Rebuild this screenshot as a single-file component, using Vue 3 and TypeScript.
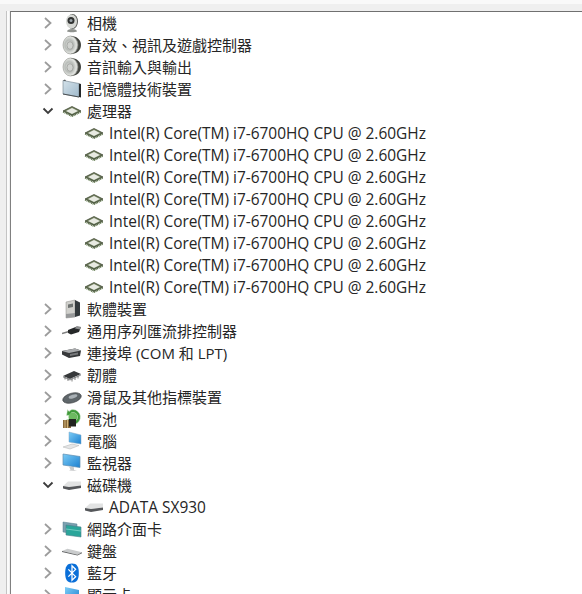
<template>
  <div class="window">
    <svg class="sprite" width="0" height="0" aria-hidden="true">
      <defs>
        <linearGradient id="screen" x1="0" y1="0" x2="1" y2="1">
          <stop offset="0" stop-color="#7cccf6" />
          <stop offset="1" stop-color="#1c80d0" />
        </linearGradient>
        <linearGradient id="chipTop" x1="0" y1="0" x2="0" y2="1">
          <stop offset="0" stop-color="#7f8a6a" />
          <stop offset="1" stop-color="#56684a" />
        </linearGradient>
        <radialGradient id="cone" cx="0.42" cy="0.5" r="0.62">
          <stop offset="0" stop-color="#f6f6f4" />
          <stop offset="0.45" stop-color="#b8bcb8" />
          <stop offset="0.75" stop-color="#e2e4e0" />
          <stop offset="1" stop-color="#a8aaa6" />
        </radialGradient>
        <linearGradient id="memoryFace" x1="0" y1="0" x2="1" y2="1">
          <stop offset="0" stop-color="#d4e2ea" />
          <stop offset="1" stop-color="#9fb9cb" />
        </linearGradient>
      </defs>
      <symbol id="camera" viewBox="0 0 20 20">
        <path d="M5 18.500c0-1.500 2-2.500 5-2.500s5 1 5 2.500c-2 1-8 1-10 0z" fill="#8f928e" />
        <ellipse cx="10.500" cy="8.500" rx="5.500" ry="7.500" fill="#5c5f5c" />
        <ellipse cx="9.500" cy="8.500" rx="5.500" ry="7" fill="#d6d8d4" />
        <circle cx="9" cy="7.500" r="3.500" fill="#303231" />
        <circle cx="9" cy="7.500" r="1.500" fill="#9aa4aa" />
      </symbol>
      <symbol id="speaker" viewBox="0 0 20 20">
        <path d="M9 1c6 0 10 4 10 9s-4 9-10 9z" fill="#42443f" />
        <ellipse cx="8.500" cy="10" rx="7.500" ry="9" fill="url(#cone)" stroke="#8e908c" stroke-width=".6" />
        <ellipse cx="8" cy="10.500" rx="3" ry="3.800" fill="#d0d2cf" stroke="#8f918d" stroke-width=".6" />
      </symbol>
      <symbol id="memory" viewBox="0 0 20 20">
        <path d="M1 1.500l16 3V18L1 15z" fill="url(#memoryFace)" stroke="#6f808c" stroke-width=".6" />
        <path d="M17 4.500l2 .5v13.500l-2-.5z" fill="#24282a" />
        <path d="M1 15l16 3" fill="none" stroke="#4c5154" />
        <path d="M1 1.500l2-1 1 1.500" fill="#3a3d3f" />
      </symbol>
      <symbol id="cpu" viewBox="0 0 20 20">
        <path d="M1 11l9 4.500 9-4.500" fill="none" stroke="#4f6a3a" stroke-width="1.300" stroke-dasharray="1 .7" />
        <path d="M10 5.500l9 4.500-9 4.500-9-4.500z" fill="url(#chipTop)" stroke="#2f3a22" stroke-width=".7" />
        <path d="M10 7l6 3-6 3-6-3z" fill="#e8eae2" />
      </symbol>
      <symbol id="software" viewBox="0 0 20 20">
        <path d="M4 3l9-2v17l-9 1z" fill="#d0d0cc" stroke="#8c8c88" stroke-width=".5" />
        <path d="M13 1l5 2.500v13L13 18z" fill="#33393c" />
        <path d="M6 5.500l5-1v3.500l-5 1z" fill="#6e7270" />
        <path d="M4 15l9-1v4l-9 1z" fill="#97999a" />
      </symbol>
      <symbol id="usb" viewBox="0 0 20 20">
        <path d="M0 12.500l7-2" stroke="#808080" stroke-width="1.400" />
        <path d="M6 9l9-3.500 4 .5-2 5-8 2.500-3-1.500z" fill="#262829" />
        <path d="M14 5.500l5 .5-1 2.500-5-1z" fill="#8d8f90" />
      </symbol>
      <symbol id="port" viewBox="0 0 20 20">
        <path d="M0 8l13-2.500 6 2-1 5.500-11 2-7-3.500z" fill="#37393b" />
        <path d="M0 8l13-2.500 6 2-12 2.500z" fill="#a9abad" />
        <path d="M8 11l8-1.500v2L8 13z" fill="#77797b" />
      </symbol>
      <symbol id="firmware" viewBox="0 0 20 20">
        <path d="M1 11l11-5 7 3-11 5z" fill="#36383a" />
        <path d="M1 11l7 3v1.500l-7-3zM8 14l11-5v1.500l-11 5z" fill="#9a9c9e" />
        <path d="M3 11.500v3M6 13v3M10 13.500v3M13 12v3M16 10.500v3" stroke="#666" stroke-width=".8" />
      </symbol>
      <symbol id="mouse" viewBox="0 0 20 20">
        <ellipse cx="10" cy="11" rx="9.500" ry="4.800" transform="rotate(-16 10 11)" fill="#5f666a" stroke="#35393b" stroke-width=".6" />
        <ellipse cx="11" cy="9.500" rx="4.500" ry="1.800" transform="rotate(-16 11 9.500)" fill="#a9b0b5" />
      </symbol>
      <symbol id="battery" viewBox="0 0 20 20">
        <path d="M11 .5a7.500 7.500 0 1 1-7 10.500l3-1a4.500 4.500 0 1 0 2-6l1.500 2-6 .5 1-6 1.500 2c1.500-1.500 2.500-2 4-2z" fill="#3f9a3a" stroke="#dcebd6" stroke-width=".5" />
        <circle cx="11" cy="8" r="4.500" fill="#6cb960" />
        <path d="M1 11h8v8H1z" fill="#8a6a3c" />
        <path d="M7 10h7v7.500H7z" fill="#222420" />
        <path d="M3 11v8M5.500 11v8" stroke="#d8bd80" stroke-width=".9" />
      </symbol>
      <symbol id="computer" viewBox="0 0 20 20">
        <path d="M7 1l12 3v9L7 11z" fill="url(#screen)" stroke="#7ea6c4" stroke-width=".5" />
        <path d="M1 16l9-3 7 1.500-9 3.500z" fill="#e4e5e6" stroke="#b0b2b3" stroke-width=".5" />
      </symbol>
      <symbol id="monitor" viewBox="0 0 20 20">
        <path d="M1 1l17 2.500v11L1 12z" fill="url(#screen)" stroke="#5f8db0" stroke-width=".7" />
        <path d="M7 13.500l5 .8v2.700l3 1-8-.4 1.500-.9z" fill="#c8cacb" />
      </symbol>
      <symbol id="disk" viewBox="0 0 20 20">
        <path d="M1 11l5-4.500h13v4L7 12z" fill="#e2e3e3" />
        <path d="M1 11l6 1 12-1.500V13L7 15l-6-1.500z" fill="#55575a" />
      </symbol>
      <symbol id="network" viewBox="0 0 20 20">
        <path d="M1 3l14 2v10L1 13z" fill="#7ba0b0" stroke="#557c8c" stroke-width=".5" />
        <path d="M4 6l15 2v10L4 16z" fill="#2aa59a" stroke="#4d7f8c" stroke-width=".6" />
        <path d="M4 10l15 2" stroke="#7fd4c8" stroke-width=".8" />
      </symbol>
      <symbol id="keyboard" viewBox="0 0 22 20">
        <path d="M0 10l6-2.500 16 4-5 2.500z" fill="#c9cbcc" />
        <path d="M0 10l17 4 5-2.500v1L17 15 0 11z" fill="#5d5f60" />
      </symbol>
      <symbol id="bluetooth" viewBox="0 0 16 22">
        <path d="M8 .5c5.500 0 7.500 3.500 7.500 10.500S13.500 21.500 8 21.500.5 18 .5 11 2.500.5 8 .5z" fill="#0a6fd8" />
        <path d="M4 7l8 8-4 4V3l4 4-8 8" fill="none" stroke="#fff" stroke-width="1.400" />
      </symbol>
      <symbol id="display" viewBox="0 0 20 20">
        <path d="M3 2l14 3v14H3z" fill="url(#screen)" />
      </symbol>
    </svg>

    <div class="rail"></div>
    <div class="pane">
      <ul class="tree">
        <li
          v-for="(row, index) in rows"
          :key="index"
          :class="['row', { child: row.child }]"
        >
          <span v-if="!row.child" class="toggle">
            <svg v-if="row.open" class="chevron open" viewBox="0 0 12 8">
              <path d="M1.500 1.500L6 6l4.500-4.500" />
            </svg>
            <svg v-else class="chevron" viewBox="0 0 8 12">
              <path d="M1 1l5.500 5L1 11" />
            </svg>
          </span>
          <svg class="icon" viewBox="0 0 20 20">
            <use :href="`#${row.icon}`" width="20" height="20" />
          </svg>
          <span class="label">{{ row.label }}</span>
        </li>
      </ul>
    </div>
  </div>
</template>

<script setup lang="ts">
interface TreeRow {
  label: string
  icon: string
  open?: boolean
  child?: boolean
}

const cpuName = 'Intel(R) Core(TM) i7-6700HQ CPU @ 2.60GHz'

const rows: TreeRow[] = [
  { label: '相機', icon: 'camera' },
  { label: '音效、視訊及遊戲控制器', icon: 'speaker' },
  { label: '音訊輸入與輸出', icon: 'speaker' },
  { label: '記憶體技術裝置', icon: 'memory' },
  { label: '處理器', icon: 'cpu', open: true },
  ...Array.from({ length: 8 }, () => ({ label: cpuName, icon: 'cpu', child: true })),
  { label: '軟體裝置', icon: 'software' },
  { label: '通用序列匯流排控制器', icon: 'usb' },
  { label: '連接埠 (COM 和 LPT)', icon: 'port' },
  { label: '韌體', icon: 'firmware' },
  { label: '滑鼠及其他指標裝置', icon: 'mouse' },
  { label: '電池', icon: 'battery' },
  { label: '電腦', icon: 'computer' },
  { label: '監視器', icon: 'monitor' },
  { label: '磁碟機', icon: 'disk', open: true },
  { label: 'ADATA SX930', icon: 'disk', child: true },
  { label: '網路介面卡', icon: 'network' },
  { label: '鍵盤', icon: 'keyboard' },
  { label: '藍牙', icon: 'bluetooth' },
  { label: '顯示卡', icon: 'display' }
]
</script>

<style>
html,
body {
  margin: 0;
  height: 100%;
  overflow: hidden;
  background: #fff;
}
</style>

<style scoped>
.window {
  display: flex;
  width: 582px;
  height: 594px;
  box-sizing: border-box;
  padding: 11px 0 0 6px;
  background: linear-gradient(#f9f9f9 4px, #efefef 4px);
  overflow: hidden;
  font-family: "Open Sans", "Noto Sans CJK TC", sans-serif;
  color: #262626;
}

.sprite {
  position: absolute;
}

.rail {
  width: 2px;
  margin-right: 1px;
  background: #fbfbfb;
  border-left: 1px solid #c4c4c4;
}

.pane {
  flex: 1;
  min-width: 0;
  background: #fff;
  border-top: 1px solid #707070;
  border-left: 1px solid #808080;
  overflow: hidden;
}

.tree {
  list-style: none;
  margin: 0;
  padding: 0 0 0 29px;
}

.row {
  display: flex;
  align-items: center;
  height: 22px;
  font-size: 15px;
  white-space: nowrap;
}

.row.child {
  padding-left: 44px;
  font-size: 15.45px;
}

.toggle {
  display: flex;
  justify-content: center;
  align-items: center;
  width: 16px;
  margin-right: 6px;
}

.chevron {
  width: 8px;
  height: 12px;
  fill: none;
  stroke: #9c9c9c;
  stroke-width: 1.8;
}

.chevron.open {
  width: 12px;
  height: 8px;
  stroke: #3c3c3c;
}

.icon {
  width: 20px;
  height: 20px;
  flex-shrink: 0;
  margin-right: 5px;
}

.label {
  line-height: 22px;
}
</style>
